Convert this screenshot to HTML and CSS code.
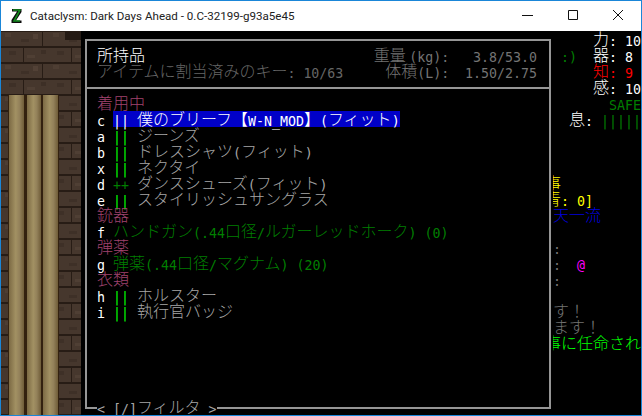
FILE: index.html
```html
<!DOCTYPE html>
<html lang="ja">
<head>
<meta charset="utf-8">
<title>Cataclysm: Dark Days Ahead</title>
<link rel="stylesheet" href="styles.css">
</head>
<body>
<div class="window">
  <header class="titlebar">
    <svg class="logo" width="11" height="16" viewBox="0 0 11 16"><path d="M1 1h9.5v3L5 12.5h5.5V15H.5v-3L6 3.5H1z" fill="#0b0b0b"/><path d="M2 2h7L3 13h6" fill="none" stroke="#118a1c" stroke-width="1.6"/></svg>
    <span class="title">Cataclysm: Dark Days Ahead - 0.C-32199-g93a5e45</span>
    <div class="controls">
      <svg width="12" height="12" viewBox="0 0 12 12"><path d="M0 6.5h11" stroke="#111" fill="none"/></svg>
      <svg width="12" height="12" viewBox="0 0 12 12"><path d="M1.5 1.5h9v9h-9z" stroke="#111" fill="none"/></svg>
      <svg width="12" height="12" viewBox="0 0 12 12"><path d="M1 1l10 10M11 1L1 11" stroke="#111" fill="none"/></svg>
    </div>
  </header>
  <main class="game">
    <svg class="wall" width="80" height="384" viewBox="0 0 80 384">
      <defs>
        <pattern id="brick" width="48" height="32" patternUnits="userSpaceOnUse">
          <rect width="48" height="32" fill="#46372d"/>
          <rect x="4" y="2" width="6" height="4" fill="#4e3e33"/>
          <rect x="20" y="8" width="8" height="3" fill="#3e3027"/>
          <rect x="32" y="3" width="5" height="5" fill="#524136"/>
          <rect x="8" y="20" width="7" height="4" fill="#3e3027"/>
          <rect x="26" y="24" width="8" height="3" fill="#4f3f34"/>
          <rect x="40" y="19" width="5" height="4" fill="#3d2f26"/>
          <rect y="15" width="48" height="2" fill="#271c15"/>
          <rect y="31" width="48" height="1" fill="#271c15"/>
          <rect y="0" width="48" height="1" fill="#271c15"/>
          <rect x="41" width="1" height="16" fill="#271c15"/>
          <rect x="22" y="16" width="1" height="16" fill="#271c15"/>
        </pattern>
        <linearGradient id="plank" x1="0" x2="1" y1="0" y2="0">
          <stop offset="0" stop-color="#7c6a44"/>
          <stop offset=".45" stop-color="#a29163"/>
          <stop offset=".7" stop-color="#93815a"/>
          <stop offset="1" stop-color="#6f5c38"/>
        </linearGradient>
      </defs>
      <rect width="80" height="384" fill="url(#brick)"/>
      <rect x="64" width="16" height="9" fill="#241a14"/>
      <rect x="7" y="64" width="51" height="320" fill="#33210f"/>
      <rect x="8" y="64" width="15" height="320" fill="url(#plank)"/>
      <rect x="26" y="64" width="14" height="320" fill="url(#plank)"/>
      <rect x="42" y="64" width="15" height="320" fill="url(#plank)"/>
    </svg>
    <section class="panel">
      <div class="frame">
        <div class="head">
          <div class="hrow"><span class="white">所持品</span><span class="dim">重量 <b class="l">(kg):   3.8/53.0</b></span></div>
          <div class="hrow"><span class="dim2">アイテムに割当済みのキー<b class="l">: 10/63</b></span><span class="dim">体積<b class="l">(L):  1.50/2.75</b></span></div>
        </div>
        <div class="list">
          <div class="row pink">着用中</div>
          <div class="row"><b class="l key">c</b><span class="sel"><b class="l">|| </b>僕のブリーフ【<b class="l">W-N_MOD</b>】<b class="l">(</b>フィット<b class="l">)</b></span></div>
          <div class="row"><b class="l key">a</b><b class="l lime">|| </b><span class="gray">ジーンズ</span></div>
          <div class="row"><b class="l key">b</b><b class="l lime">|| </b><span class="gray">ドレスシャツ<b class="l">(</b>フィット<b class="l">)</b></span></div>
          <div class="row"><b class="l key">x</b><b class="l lime">|| </b><span class="gray">ネクタイ</span></div>
          <div class="row"><b class="l key">d</b><b class="l green">++ </b><span class="gray">ダンスシューズ<b class="l">(</b>フィット<b class="l">)</b></span></div>
          <div class="row"><b class="l key">e</b><b class="l lime">|| </b><span class="gray">スタイリッシュサングラス</span></div>
          <div class="row pink">銃器</div>
          <div class="row"><b class="l key">f</b><span class="green">ハンドガン<b class="l">(.44</b>口径<b class="l">/</b>ルガーレッドホーク<b class="l">) (0)</b></span></div>
          <div class="row pink">弾薬</div>
          <div class="row"><b class="l key">g</b><span class="green">弾薬<b class="l">(.44</b>口径<b class="l">/</b>マグナム<b class="l">) (20)</b></span></div>
          <div class="row pink">衣類</div>
          <div class="row"><b class="l key">h</b><b class="l lime">|| </b><span class="gray">ホルスター</span></div>
          <div class="row"><b class="l key">i</b><b class="l lime">|| </b><span class="gray">執行官バッジ</span></div>
        </div>
        <div class="legend"><b class="l">&lt; [/]</b>フィルタ<b class="l"> &gt;</b></div>
      </div>
    </section>
    <aside class="side">
      <div class="row ind5 white">力<b class="l">: 10</b></div>
      <div class="row green hudface"><b class="l">:)</b><span class="white gapstat">器<b class="l">: 8</b></span></div>
      <div class="row ind5 red">知<b class="l">: 9</b></div>
      <div class="row ind5 white">感<b class="l">: 10</b></div>
      <div class="row ind7 green"><b class="l">SAFE</b></div>
      <div class="row ind2 white">息<b class="l">: <span class="green">|||||</span></b></div>
      <div class="row"></div>
      <div class="row"></div>
      <div class="row"></div>
      <div class="row clip yellow">事</div>
      <div class="row clip yellow">青<b class="l">: 0]</b></div>
      <div class="row blue">天一流</div>
      <div class="row"></div>
      <div class="row dim"><b class="l">:</b></div>
      <div class="row dim"><b class="l">:  <span class="magenta">@</span></b></div>
      <div class="row dim"><b class="l">:</b></div>
      <div class="row"></div>
      <div class="row dim">す！</div>
      <div class="row dim">ます！</div>
      <div class="row clip lime">事に任命され</div>
    </aside>
  </main>
</div>
</body>
</html>
```

FILE: styles.css
```css
* { box-sizing: border-box; }
html, body { margin: 0; height: 100%; }
body { width: 642px; height: 416px; overflow: hidden; background: #000; }
.window {
  width: 642px; height: 416px; display: flex; flex-direction: column;
  border: 1px solid #1a86d8; background: #000; overflow: hidden;
}
.titlebar {
  flex: none; height: 30px; background: #fff; display: flex; align-items: center;
  padding-left: 10px;
}
.logo { margin-right: 8px; flex: none; }
.title { font: 11.6px Roboto, sans-serif; color: #222; }
.controls { margin-left: auto; margin-bottom: 2px; display: flex; gap: 33px; padding-right: 17px; }
.game {
  flex: 1; display: flex; min-height: 0;
  font: 300 16px/14px "Noto Sans CJK JP", sans-serif; color: #a6a6a6;
}
.l { font: 13.28px/14px "DejaVu Sans Mono", monospace; vertical-align: -1px; }
.wall { flex: none; display: block; }
.panel { flex: none; width: 472px; padding: 8px 2px 6px 4px; background: #000; }
.frame { position: relative; height: 100%; border: 2px solid #969696; display: flex; flex-direction: column; }
.head { padding: 6px 12px 8px 10px; border-bottom: 2px solid #969696; }
.hrow { display: flex; justify-content: space-between; height: 16px; white-space: pre; }
.list { padding: 6px 0 0 10px; }
.row { height: 16px; white-space: pre; }
.key { color: #fff; display: inline-block; width: 16px; }
.sel { background: #0000c8; color: #fff; display: inline-block; height: 16px; }
.legend {
  position: absolute; left: 10px; bottom: -8px; height: 16px; background: #000; white-space: pre;
}
.side { flex: none; width: 88px; overflow: hidden; background: #000; }
.ind5 { padding-left: 40px; }
.ind7 { padding-left: 56px; }
.ind2 { padding-left: 16px; }
.hudface { padding-left: 8px; }
.gapstat { margin-left: 16px; }
.clip { margin-left: -8px; }
.white { color: #fff; }
.dim { color: #747474; }
.dim2 { color: #666; }
.gray { color: #a6a6a6; }
.pink { color: #a0436f; }
.green { color: #007f00; }
.lime { color: #00ff00; }
.red { color: #ff0000; }
.yellow { color: #ffff00; }
.blue { color: #0000dc; }
.magenta { color: #ff00ff; }
```
